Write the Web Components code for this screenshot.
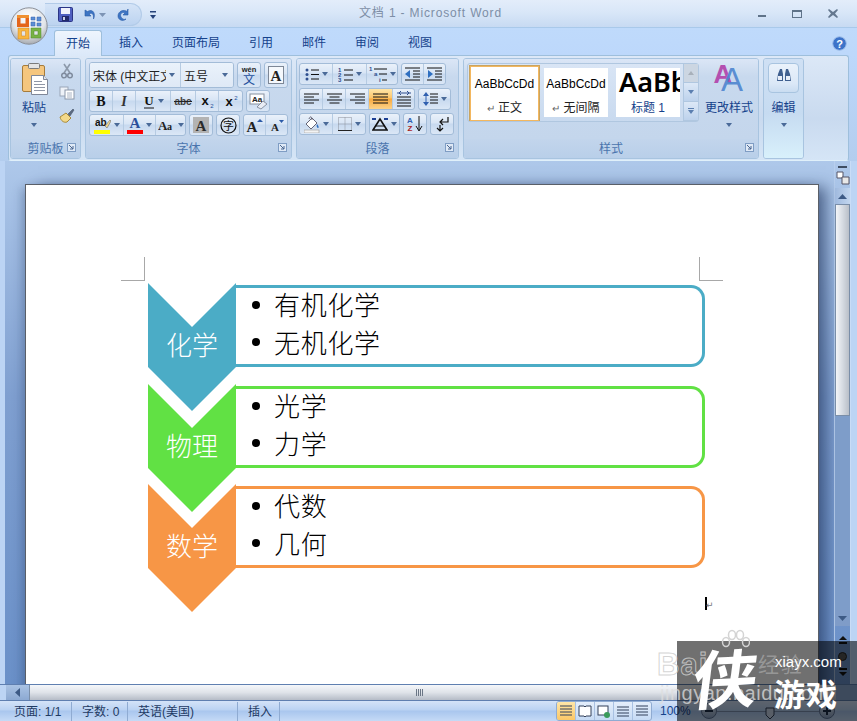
<!DOCTYPE html>
<html lang="zh-CN">
<head>
<meta charset="UTF-8">
<title>文档 1 - Microsoft Word</title>
<style>
    html, body { margin: 0; padding: 0; height: 100%; overflow: hidden; }
    body { font: 12px "Liberation Sans", "Noto Sans CJK SC", sans-serif; }
</style>
</head>
<body>
<word-window>
    <title-bar slot="title"></title-bar>
    <ribbon-tabs slot="tabs"></ribbon-tabs>

    <ribbon-panel slot="ribbon">
        <ribbon-group label="剪贴板" w="71" launcher>
            <tool-row gap="0">
                <big-btn w="46" label="粘贴" icon="paste" caret></big-btn>
                <tool-stack gap="0" top="1">
                    <tool-btn w="20" h="22" icon="cut" flat></tool-btn>
                    <tool-btn w="20" h="22" icon="copy" flat></tool-btn>
                    <tool-btn w="20" h="22" icon="painter" flat></tool-btn>
                </tool-stack>
            </tool-row>
        </ribbon-group>

        <ribbon-group label="字体" w="207" launcher>
            <tool-stack gap="2" top="3" left="3">
                <tool-row gap="3">
                    <tool-strip>
                        <combo-box w="91" text="宋体 (中文正文)"></combo-box>
                        <combo-box w="52" text="五号"></combo-box>
                    </tool-strip>
                    <tool-strip><tool-btn w="22" h="24" icon="wen"></tool-btn></tool-strip>
                    <tool-strip><tool-btn w="22" h="24" icon="boxA"></tool-btn></tool-strip>
                </tool-row>
                <tool-row gap="3">
                    <tool-strip>
                        <tool-btn w="23" icon="bold"></tool-btn>
                        <tool-btn w="23" icon="italic"></tool-btn>
                        <tool-btn w="35" icon="under" caret></tool-btn>
                        <tool-btn w="25" icon="strike"></tool-btn>
                        <tool-btn w="23" icon="sub"></tool-btn>
                        <tool-btn w="23" icon="sup"></tool-btn>
                    </tool-strip>
                    <tool-strip><tool-btn w="22" icon="clearfmt"></tool-btn></tool-strip>
                </tool-row>
                <tool-row gap="3">
                    <tool-strip>
                        <tool-btn w="34" icon="highlight" caret></tool-btn>
                        <tool-btn w="32" icon="fontcolor" caret></tool-btn>
                        <tool-btn w="29" icon="changecase" caret></tool-btn>
                    </tool-strip>
                    <tool-strip><tool-btn w="22" icon="shadeA"></tool-btn></tool-strip>
                    <tool-strip><tool-btn w="22" icon="circled"></tool-btn></tool-strip>
                    <tool-strip>
                        <tool-btn w="22" icon="grow"></tool-btn>
                        <tool-btn w="21" icon="shrink"></tool-btn>
                    </tool-strip>
                </tool-row>
            </tool-stack>
        </ribbon-group>

        <ribbon-group label="段落" w="163" launcher>
            <tool-stack gap="3" top="4" left="2">
                <tool-row gap="3">
                    <tool-strip>
                        <tool-btn w="33" icon="bullets" caret></tool-btn>
                        <tool-btn w="34" icon="numbers" caret></tool-btn>
                        <tool-btn w="30" icon="multi" caret></tool-btn>
                    </tool-strip>
                    <tool-strip>
                        <tool-btn w="22" icon="outdent"></tool-btn>
                        <tool-btn w="21" icon="indent"></tool-btn>
                    </tool-strip>
                </tool-row>
                <tool-row gap="3">
                    <tool-strip>
                        <tool-btn w="23" icon="alignL"></tool-btn>
                        <tool-btn w="23" icon="alignC"></tool-btn>
                        <tool-btn w="23" icon="alignR"></tool-btn>
                        <tool-btn w="24" icon="alignJ" active></tool-btn>
                        <tool-btn w="21" icon="distribute"></tool-btn>
                    </tool-strip>
                    <tool-strip><tool-btn w="31" icon="spacing" caret></tool-btn></tool-strip>
                </tool-row>
                <tool-row gap="3">
                    <tool-strip>
                        <tool-btn w="33" icon="fill" caret></tool-btn>
                        <tool-btn w="32" icon="borders" caret></tool-btn>
                    </tool-strip>
                    <tool-strip><tool-btn w="29" icon="chinese" caret></tool-btn></tool-strip>
                    <tool-strip><tool-btn w="22" icon="sort"></tool-btn></tool-strip>
                    <tool-strip><tool-btn w="22" icon="marks"></tool-btn></tool-strip>
                </tool-row>
            </tool-stack>
        </ribbon-group>

        <ribbon-group label="样式" w="296" launcher>
            <tool-row gap="4" pad="3">
                <style-gallery>
                    <style-card w="71" sel mark label="正文">AaBbCcDd</style-card>
                    <style-card w="64" mark label="无间隔">AaBbCcDd</style-card>
                    <style-card w="64" big label="标题 1">AaBb</style-card>
                </style-gallery>
                <big-btn w="52" label="更改样式" icon="changestyle" caret></big-btn>
            </tool-row>
        </ribbon-group>

        <ribbon-group label="" w="41" hot>
            <edit-btn></edit-btn>
        </ribbon-group>
    </ribbon-panel>

    <doc-area slot="doc">
        <doc-page>
            <smart-row style="height:101px" color="#4bacc6" name="化学">
                <li-item>有机化学</li-item>
                <li-item>无机化学</li-item>
            </smart-row>
            <smart-row style="height:100px" color="#61e144" name="物理">
                <li-item>光学</li-item>
                <li-item>力学</li-item>
            </smart-row>
            <smart-row style="height:100px" color="#f79646" name="数学">
                <li-item>代数</li-item>
                <li-item>几何</li-item>
            </smart-row>
        </doc-page>
    </doc-area>

    <h-scroll slot="hscroll"></h-scroll>
    <status-bar slot="status"></status-bar>
    <site-badge slot="badge"></site-badge>
</word-window>

<script>
    const CJK = '"Liberation Sans", "Noto Sans CJK SC", sans-serif';
    const svg = (w, h, body) => `<svg width="${w}" height="${h}" viewBox="0 0 ${w} ${h}" xmlns="http://www.w3.org/2000/svg">${body}</svg>`;
    const lines = (rows) => rows.map(r => `<path d="M${r[0]} ${r[1]}h${r[2]}" stroke="${r[3] || '#111'}" stroke-width="1"/>`).join('');

    // icons of the ribbon, drawn at their own pixel size
    const ICONS = {
        paste: svg(30, 32, `<rect x="3.500" y="2.500" width="22" height="26" rx="1.500" fill="#f5c67e" stroke="#a67c3c"/><rect x="9.500" y="0.500" width="11" height="5" rx="1" fill="#e4e4e4" stroke="#7b7b7b"/><path d="M12.500 12.500h12l4 4v15h-16z" fill="#fff" stroke="#7f8798"/><path d="M24.500 12.500v4h4" fill="#dfe5ee" stroke="#7f8798"/>${lines([[15,18.5,8,'#8f96a6'],[15,21.5,11,'#8f96a6'],[15,24.5,11,'#8f96a6'],[15,27.5,11,'#8f96a6']])}`),
        cut: svg(12, 16, `<path d="M3 1l6 9M9 1L3 10" stroke="#8d99aa" stroke-width="1.6" fill="none"/><circle cx="3" cy="12.500" r="2.300" fill="none" stroke="#7f8b9d" stroke-width="1.500"/><circle cx="9" cy="12.500" r="2.300" fill="none" stroke="#7f8b9d" stroke-width="1.500"/>`),
        copy: svg(16, 14, `<rect x="1" y="1" width="8" height="9" fill="#eef2f8" stroke="#9aa6b8"/><rect x="6" y="4" width="9" height="9" fill="#fff" stroke="#8b97aa"/>${lines([[8,7,5,'#aab4c4'],[8,9,5,'#aab4c4'],[8,11,5,'#aab4c4']])}`),
        painter: svg(16, 15, `<path d="M1 9l6-4 5 5-4 4c-3 1-6-1-7-5z" fill="#f3d98a" stroke="#a88a3a"/><path d="M9 6l5-5 1 1-4 6z" fill="#5b6a80" stroke="#47566c" stroke-width=".6"/>`),
        wen: svg(18, 20, `<text x="9" y="7" font-size="7.500" font-weight="700" text-anchor="middle" fill="#222" font-family="Liberation Sans">wén</text><text x="9" y="19" font-size="12" text-anchor="middle" fill="#1f4f9c" font-family="Noto Sans CJK SC">文</text>`),
        boxA: svg(16, 18, `<rect x=".5" y=".5" width="15" height="17" fill="#f5f8fc" stroke="#7d8796"/><text x="8" y="15" font-size="15" font-weight="700" text-anchor="middle" fill="#222" font-family="Liberation Serif">A</text>`),
        bold: svg(12, 14, `<text x="6" y="12" font-size="14" font-weight="700" text-anchor="middle" fill="#111" font-family="Liberation Serif">B</text>`),
        italic: svg(10, 14, `<text x="5" y="12" font-size="14" font-style="italic" font-weight="700" text-anchor="middle" fill="#333" font-family="Liberation Serif">I</text>`),
        under: svg(12, 15, `<text x="6" y="11" font-size="13" font-weight="700" text-anchor="middle" fill="#111" font-family="Liberation Serif">U</text><path d="M1 14h10" stroke="#111"/>`),
        strike: svg(18, 12, `<text x="9" y="10" font-size="10" font-weight="700" text-anchor="middle" fill="#444" font-family="Liberation Sans">abc</text><path d="M0 6.500h18" stroke="#222"/>`),
        sub: svg(14, 14, `<text x="5" y="11" font-size="13" font-weight="700" text-anchor="middle" fill="#111" font-family="Liberation Sans">x</text><text x="12" y="14" font-size="6" text-anchor="middle" fill="#1d4f9c" font-family="Liberation Sans">2</text>`),
        sup: svg(14, 14, `<text x="5" y="12" font-size="13" font-weight="700" text-anchor="middle" fill="#111" font-family="Liberation Sans">x</text><text x="12" y="6" font-size="6" text-anchor="middle" fill="#1d4f9c" font-family="Liberation Sans">2</text>`),
        clearfmt: svg(19, 17, `<rect x="1" y="1" width="14" height="10" fill="#fff" stroke="#8791a0"/><text x="8" y="9" font-size="8" font-weight="700" text-anchor="middle" fill="#222" font-family="Liberation Sans">Aa</text><path d="M8 14l6-6 4 3-6 5z" fill="#e8ecf4" stroke="#8a93a4"/>`),
        highlight: svg(17, 20, `<text x="1" y="11" font-size="10" font-weight="700" fill="#111" font-family="Liberation Sans">ab</text><path d="M11 11l5-6 1 1-4 7z" fill="#f1d68d" stroke="#7d7d7d" stroke-width=".7"/><rect y="15" width="16" height="4" fill="#ffff00"/>`),
        fontcolor: svg(16, 20, `<text x="8" y="13" font-size="15" font-weight="700" text-anchor="middle" fill="#2b4f9a" font-family="Liberation Serif">A</text><rect y="15" width="16" height="4" fill="#f00"/>`),
        changecase: svg(17, 14, `<text x="0" y="12" font-size="13" font-weight="700" fill="#222" font-family="Liberation Serif">A</text><text x="9" y="12" font-size="10" font-weight="700" fill="#222" font-family="Liberation Serif">a</text>`),
        shadeA: svg(16, 16, `<rect width="16" height="16" fill="#b3b3b3"/><text x="8" y="14" font-size="15" font-weight="700" text-anchor="middle" fill="#2c2c2c" font-family="Liberation Serif">A</text>`),
        circled: svg(17, 17, `<circle cx="8.500" cy="8.500" r="7.500" fill="none" stroke="#111" stroke-width="1.200"/><text x="8.500" y="12.500" font-size="11" text-anchor="middle" fill="#111" font-family="Noto Sans CJK SC">字</text>`),
        grow: svg(17, 15, `<text x="6" y="14" font-size="15" font-weight="700" text-anchor="middle" fill="#222" font-family="Liberation Serif">A</text><path d="M11 4l3-3 3 3z" fill="#2b5aa8"/>`),
        shrink: svg(14, 13, `<text x="5" y="12" font-size="11" font-weight="700" text-anchor="middle" fill="#222" font-family="Liberation Serif">A</text><path d="M9 1h5l-2.500 3z" fill="#2b5aa8"/>`),
        bullets: svg(14, 13, `<g fill="#2f4f8f"><circle cx="2" cy="2" r="1.500"/><circle cx="2" cy="6.500" r="1.500"/><circle cx="2" cy="11" r="1.500"/></g>${lines([[6,2,8],[6,6.5,8],[6,11,8]])}`),
        numbers: svg(15, 15, `<g fill="#2f4f8f" font-size="6" font-weight="700" font-family="Liberation Sans"><text x="0" y="5">1</text><text x="0" y="10">2</text><text x="0" y="15">3</text></g>${lines([[6,3,9],[6,8,9],[6,13,9]])}`),
        multi: svg(18, 17, `<g fill="#2f4f8f" font-size="6" font-weight="700" font-family="Liberation Sans"><text x="0" y="5">1</text><text x="5" y="10">a</text><text x="10" y="16">i</text></g>${lines([[5,3,13],[10,8,8],[13,14,5]])}`),
        outdent: svg(16, 15, `${lines([[0,1,15],[8,4,7],[8,7,7],[8,10,7],[0,13,15]])}<path d="M0 7l5-4v8z" fill="#2f6fc0"/>`),
        indent: svg(16, 15, `${lines([[0,1,15],[8,4,7],[8,7,7],[8,10,7],[0,13,15]])}<path d="M6 7L1 3v8z" fill="#2f6fc0"/>`),
        alignL: svg(15, 12, lines([[0,1,15],[0,4,10],[0,7,15],[0,10,10]])),
        alignC: svg(15, 12, lines([[0,1,15],[2.5,4,10],[0,7,15],[2.5,10,10]])),
        alignR: svg(15, 12, lines([[0,1,15],[5,4,10],[0,7,15],[5,10,10]])),
        alignJ: svg(15, 12, lines([[0,1,15],[0,4,15],[0,7,15],[0,10,15]])),
        distribute: svg(16, 16, `<path d="M1 2h14M3 2l2-2M3 2l2 2M13 2l-2-2M13 2l-2 2" stroke="#2f4f8f" fill="none"/>${lines([[1,6,14],[1,9,14],[1,12,14],[1,15,14]])}`),
        spacing: svg(15, 16, `<path d="M3 1l3 4H0zM3 15l3-4H0z" fill="#2f5faf"/><path d="M3 5v6" stroke="#2f5faf"/>${lines([[7,3,8],[7,6,8],[7,9,8],[7,12,8]])}`),
        fill: svg(16, 17, `<path d="M2 8l6-6 5 5-6 6z" fill="#fff" stroke="#667"/><path d="M5 3c1-3 3-3 3 1" stroke="#667" fill="none"/><path d="M13 8c2 2 2 4 1 4s-2-2-1-4z" fill="#2f6fc0"/><rect y="14" width="15" height="3" fill="#f3f3f3" stroke="#999" stroke-width=".6"/>`),
        borders: svg(14, 14, `<path d="M.5.5h13v13H.5zM7 .5v13M.5 7h13" fill="none" stroke="#8a8f98" stroke-dasharray="1 1"/><path d="M0 13.500h14" stroke="#222"/>`),
        chinese: svg(16, 14, `<path d="M8 2L1 13h14z" fill="none" stroke="#111" stroke-width="1.600"/><path d="M3 9h10" stroke="#111"/><path d="M0 2h4M12 2h4" stroke="#1c3f94" stroke-width="2"/>`),
        sort: svg(18, 16, `<text x="4" y="7" font-size="8" font-weight="700" text-anchor="middle" fill="#2f5faf" font-family="Liberation Sans">A</text><text x="4" y="15" font-size="8" font-weight="700" text-anchor="middle" fill="#a22" font-family="Liberation Sans">Z</text><path d="M13 0v14M10 10l3 5 3-5" fill="none" stroke="#111"/>`),
        marks: svg(14, 16, `<path d="M13 1v5H6M8 3L5 6l3 3" stroke="#111" fill="none" stroke-width="1.200"/><path d="M5 9v6M2 12l3 3 3-3" stroke="#111" fill="none" stroke-width="1.200"/>`),
        changestyle: svg(32, 30, `<text x="10" y="20" font-size="26" font-weight="700" text-anchor="middle" fill="#b44fb0" font-family="Liberation Sans">A</text><text x="19" y="28" font-size="33" text-anchor="middle" fill="#4f86d0" font-family="Liberation Sans" fill-opacity=".92">A</text>`)
    };

    function shadow(el, html) {
        el.attachShadow({ mode: 'open' }).innerHTML = html;
    }

    class WordWindow extends HTMLElement {
        connectedCallback() {
            shadow(this, `<style>
                :host { display: flex; flex-direction: column; position: relative; width: 857px; height: 721px; overflow: hidden; background: #bcd4f4; }
                .main { flex: 1; min-height: 0; display: flex; flex-direction: column; }
            </style>
            <slot name="title"></slot>
            <slot name="tabs"></slot>
            <slot name="ribbon"></slot>
            <div class="main"><slot name="doc"></slot></div>
            <slot name="hscroll"></slot>
            <slot name="status"></slot>
            <slot name="badge"></slot>`);
        }
    }

    class TitleBar extends HTMLElement {
        connectedCallback() {
            shadow(this, `<style>
                :host { display: flex; align-items: center; height: 27px; position: relative; border-bottom: 1px solid #a9c9ea; background: linear-gradient(#e3edfa, #d9e7f8 45%, #c7daf2); }
                .qat { display: flex; align-items: center; height: 21px; margin: 2px 0 0 45px; padding-left: 13px; width: 83px; border: 1px solid #b2cbe8; border-left: 0; border-radius: 0 12px 12px 0; background: linear-gradient(#d5e4f7, #bcd3f0); box-sizing: content-box; }
                .more { margin: 3px 0 0 8px; }
                .title { position: absolute; left: 0; right: 0; top: 3px; text-align: center; font: 12px ${CJK}; color: #7d8ea6; letter-spacing: .85px; padding-left: 4px; box-sizing: border-box; }
                .win { margin-left: auto; display: flex; gap: 26px; padding-right: 19px; align-items: center; }
                .win svg:first-child { margin-top: 6px; }
                .orb { position: absolute; left: 10px; top: 7px; z-index: 5; }
            </style>
            <div class="qat">
                ${svg(16, 16, `<rect x=".5" y=".5" width="14" height="14" rx="1" fill="#4f5fc0" stroke="#2b3585"/><rect x="3" y="1" width="9" height="6" fill="#f0f2fb"/><rect x="4" y="9" width="7" height="5" fill="#222a6a"/><rect x="5" y="10" width="2" height="3" fill="#c9cfe8"/>`)}
                <span style="width:7px"></span>
                ${svg(15, 15, `<path d="M4 3v6h6L8 7c3-2 5 0 4.500 5C15 7 12 1 6.500 4.500z" fill="#3d75c4" stroke="#2a5aa6" stroke-width=".6"/>`)}
                <svg width="7" height="4" style="margin-left:3px"><path d="M0 0h7L3.500 4z" fill="#7d94b5"/></svg>
                <span style="width:10px"></span>
                ${svg(15, 15, `<path d="M12 2v6H7l2-2C6 4.500 3.500 7 5 10c1 2 3 3 5 2-3 3-8 1-8-3 0-5 6-7 9-4.500z" fill="#3d75c4" stroke="#2a5aa6" stroke-width=".6"/>`)}
            </div>
            <svg class="more" width="7" height="9"><path d="M0 0h6v1.500H0z" fill="#27437a"/><path d="M0 4h6L3 8z" fill="#27437a"/></svg>
            <div class="title">文档 1 - Microsoft Word</div>
            <div class="win">
                <svg width="8" height="3"><rect width="8" height="2" fill="#5f7389"/></svg>
                <svg width="10" height="8"><rect x=".5" y=".5" width="9" height="7" fill="none" stroke="#5f7389"/><rect width="10" height="2" fill="#5f7389"/></svg>
                <svg width="10" height="9"><path d="M1 0l4 3 4-3 1 1-3 3.500L10 8 9 9 5 6 1 9 0 8l3-3.500L0 1z" fill="#64788f"/></svg>
            </div>
            <svg class="orb" width="38" height="38" viewBox="0 0 38 38">
                <defs><radialGradient id="o" cx=".5" cy=".3" r=".75"><stop offset="0" stop-color="#fff"/><stop offset=".6" stop-color="#e2e5e9"/><stop offset="1" stop-color="#9a9ea4"/></radialGradient></defs>
                <circle cx="19" cy="19" r="18.200" fill="url(#o)" stroke="#8c9098"/>
                <path fill-rule="evenodd" d="M7 8h12v12H7zM10.500 11v5.500H15.500V11z" fill="#e4651b"/>
                <path d="M7 8h12v3H7z" fill="#f09030"/>
                <path d="M21 10h4v3h-4zM27 10h4v4h-4zM21 15h4v4h-4zM27 16h4v3h-4z" fill="#5d8ed4" stroke="#3563ad" stroke-width=".5"/>
                <path fill-rule="evenodd" d="M8 21h11v11H8zM11.500 24v5H15.500v-5z" fill="#f8b63f" stroke="#d6821a" stroke-width=".5"/>
                <path fill-rule="evenodd" d="M21 21h10v10H21zM24 24v4h4v-4z" fill="#78b246" stroke="#4d8a28" stroke-width=".5"/>
            </svg>`);
        }
    }

    class RibbonTabs extends HTMLElement {
        connectedCallback() {
            const names = ['开始', '插入', '页面布局', '引用', '邮件', '审阅', '视图'];
            shadow(this, `<style>
                :host { display: flex; height: 27px; padding-left: 54px; gap: 5px; align-items: flex-end; position: relative; background: linear-gradient(#bfdafb, #bdd8fb); }
                span { display: block; height: 25px; padding: 0 12px; font: 12px/26px ${CJK}; color: #15428b; box-sizing: border-box; }
                .on { background: linear-gradient(#eef5fd, #dbe8f9); border: 1px solid #9ebfdc; border-bottom: 0; border-radius: 3px 3px 0 0; padding: 0 11px; margin-bottom: -1px; height: 26px; position: relative; z-index: 2; }
                .help { position: absolute; right: 10px; top: 8px; }
            </style>
            ${names.map((n, i) => `<span class="${i ? '' : 'on'}">${n}</span>`).join('')}
            <svg class="help" width="15" height="15"><circle cx="7.500" cy="7.500" r="6.800" fill="#3d73c9" stroke="#9dbde8"/><text x="7.500" y="11.500" font-size="11" font-weight="700" text-anchor="middle" fill="#fff" font-family="Liberation Sans">?</text></svg>`);
        }
    }

    class RibbonPanel extends HTMLElement {
        connectedCallback() {
            shadow(this, `<style>
                :host { display: block; height: 106px; box-sizing: border-box; padding: 0 8px 0 8px; background: linear-gradient(#bdd8fb 0, #b3cdee 100%); }
                .box { height: 106px; box-sizing: border-box; display: flex; gap: 4px; padding: 2px 0 1px 1px; border: 1px solid #9ebfdc; border-bottom-color: #e0f0fa; border-radius: 3px; background: linear-gradient(#dce8f7, #c9daef 60%, #d5e5f6); }
            </style>
            <div class="box"><slot></slot></div>`);
        }
    }

    class RibbonGroup extends HTMLElement {
        connectedCallback() {
            const label = this.getAttribute('label');
            shadow(this, `<style>
                :host { display: flex; flex-direction: column; flex: none; width: ${this.getAttribute('w')}px; box-sizing: border-box; border: 1px solid #a8c4e0; border-radius: 3px; overflow: hidden; position: relative; }
                .body { flex: 1; background: ${this.hasAttribute('hot') ? 'linear-gradient(#cfe0f4, #c6dbf1 55%, #d8f0fb)' : 'linear-gradient(#dbe6f6, #c8d9ee 22%, #c4d6ec)'}; }
                .label { height: 19px; text-align: center; font: 12px/20px ${CJK}; color: #4a74ad; background: linear-gradient(#c2d5ec, #b9cfe9); overflow: hidden; }
                :host([hot]) .label { display: none; }
                svg { position: absolute; right: 4px; bottom: 6px; }
            </style>
            <div class="body"><slot></slot></div>
            <div class="label">${label}</div>
            ${this.hasAttribute('launcher') ? `<svg width="9" height="9"><rect x=".5" y=".5" width="8" height="8" fill="#dfe9f6" stroke="#7f9dc4"/><path d="M2 2l4 4M6 3v3H3" fill="none" stroke="#48658f"/></svg>` : ''}`);
        }
    }

    class ToolRow extends HTMLElement {
        connectedCallback() {
            shadow(this, `<style>:host { display: flex; gap: ${this.getAttribute('gap') || 0}px; padding-left: ${this.getAttribute('pad') || 0}px; }</style><slot></slot>`);
        }
    }

    class ToolStack extends HTMLElement {
        connectedCallback() {
            shadow(this, `<style>:host { display: flex; flex-direction: column; gap: ${this.getAttribute('gap') || 0}px; padding: ${this.getAttribute('top') || 0}px 0 0 ${this.getAttribute('left') || 0}px; }</style><slot></slot>`);
        }
    }

    class ToolStrip extends HTMLElement {
        connectedCallback() {
            shadow(this, `<style>
                :host { display: inline-flex; flex: none; border: 1px solid #a3bcd8; border-radius: 3px; overflow: hidden; background: linear-gradient(#eaf1fa, #d8e5f5 45%, #c7d9ef 50%, #dbe7f6); box-sizing: border-box; }
                ::slotted(*:not(:last-child)) { border-right: 1px solid #b6cbe2; }
            </style><slot></slot>`);
        }
    }

    class ToolBtn extends HTMLElement {
        connectedCallback() {
            const w = this.getAttribute('w'), h = this.getAttribute('h') || 20;
            shadow(this, `<style>
                :host { display: flex; flex: none; align-items: center; justify-content: center; gap: 3px; width: ${w}px; height: ${h}px; box-sizing: border-box; }
                :host([active]) { background: linear-gradient(#ffe6a8, #fdc56a 45%, #f9a93e 50%, #fcd38a); }
                svg { display: block; flex: none; }
                .c { flex: none; width: 0; height: 0; border: 3px solid transparent; border-top: 4px solid #4a6a98; border-bottom: 0; }
            </style>
            ${ICONS[this.getAttribute('icon')]}
            ${this.hasAttribute('caret') ? '<i class="c"></i>' : ''}`);
        }
    }

    class ComboBox extends HTMLElement {
        connectedCallback() {
            shadow(this, `<style>
                :host { display: flex; align-items: center; flex: none; width: ${this.getAttribute('w')}px; height: 24px; box-sizing: border-box; padding: 0 5px 0 3px; background: linear-gradient(#eaf2fb, #dfe9f6); }
                span { flex: 1; overflow: hidden; white-space: nowrap; font: 12px ${CJK}; color: #222; }
                i { width: 0; height: 0; border: 3px solid transparent; border-top: 4px solid #4a6a98; border-bottom: 0; margin-left: 3px; }
            </style><span>${this.getAttribute('text')}</span><i></i>`);
        }
    }

    class BigBtn extends HTMLElement {
        connectedCallback() {
            shadow(this, `<style>
                :host { display: flex; flex-direction: column; align-items: center; flex: none; width: ${this.getAttribute('w')}px; padding-top: 4px; font: 12px/15px ${CJK}; color: #15428b; }
                .ic { height: 34px; }
                .l { margin-top: 4px; white-space: nowrap; }
                i { width: 0; height: 0; margin-top: 7px; border: 3px solid transparent; border-top: 4px solid #4a6a98; border-bottom: 0; }
            </style>
            <div class="ic">${ICONS[this.getAttribute('icon')]}</div>
            <div class="l">${this.getAttribute('label')}</div>
            <i></i>`);
        }
    }

    class EditBtn extends HTMLElement {
        connectedCallback() {
            shadow(this, `<style>
                :host { display: flex; flex-direction: column; align-items: center; padding-top: 4px; font: 12px/15px ${CJK}; color: #15428b; }
                .ic { width: 31px; height: 30px; box-sizing: border-box; display: flex; align-items: center; justify-content: center; border: 1px solid #a8c4e0; border-radius: 4px; background: linear-gradient(#eaf2fb, #dbe8f7 70%, #c9dcf1); padding-bottom: 6px; }
                .l { margin-top: 8px; }
                i { width: 0; height: 0; margin-top: 7px; border: 3px solid transparent; border-top: 4px solid #4a6a98; border-bottom: 0; }
            </style>
            <div class="ic"><svg width="16" height="14"><path d="M2 6l2-5h2l1 5v7H1zM9 6l1-5h2l2 5 1 7H9z" fill="#3f5f8f"/><path d="M2 8h4v4H2zM10 8h4v4h-4z" fill="#e8eef8"/></svg></div>
            <div class="l">编辑</div>
            <i></i>`);
        }
    }

    class StyleGallery extends HTMLElement {
        connectedCallback() {
            shadow(this, `<style>
                :host { display: flex; flex: none; width: 232px; height: 59px; margin-top: 4px; box-sizing: border-box; border: 1px solid #b0c7e0; border-radius: 3px; background: linear-gradient(#d9e5f5, #c9daef); padding: 1px 0 0 1px; }
                .cards { display: flex; gap: 4px; width: 217px; overflow: hidden; align-items: flex-start; }
                .sb { margin-left: auto; width: 14px; display: flex; flex-direction: column; border-left: 1px solid #b0c7e0; margin-top: -1px; }
                .sb div { flex: 1; display: flex; align-items: center; justify-content: center; border-bottom: 1px solid #b0c7e0; background: linear-gradient(#dce8f7, #bdd2ec); }
                .sb div:first-child { background: #ccd6e2; }
                .sb i { width: 0; height: 0; border: 3px solid transparent; border-top: 4px solid #5c7fb0; border-bottom: 0; }
                .sb div:first-child i { border-top: 0; border-bottom: 4px solid #a8b0ba; }
                .sb div:last-child { flex-direction: column; gap: 1px; }
                .sb b { width: 6px; height: 1px; background: #5c7fb0; }
            </style>
            <div class="cards"><slot></slot></div>
            <div class="sb"><div><i></i></div><div><i></i></div><div><b></b><i></i></div></div>`);
        }
    }

    class StyleCard extends HTMLElement {
        connectedCallback() {
            const big = this.hasAttribute('big');
            shadow(this, `<style>
                :host { display: flex; flex-direction: column; align-items: center; flex: none; width: ${this.getAttribute('w')}px; height: 49px; margin-top: 3px; padding-top: ${big ? 0 : 6}px; box-sizing: border-box; background: #fff; overflow: hidden; color: #000; }
                :host([big]) { margin-left: 4px; }
                :host([sel]) { height: 57px; margin-top: 0; border: 2px solid #f3b75f; outline: 1px solid #c9a460; outline-offset: -1px; padding-top: 7px; }
                .s { font: ${big ? '600 27px/28px "Noto Sans"' : '12px/20px "Liberation Sans"'}; white-space: nowrap; align-self: ${big ? 'flex-start' : 'center'}; padding-left: ${big ? 3 : 0}px; }
                .n { margin-top: ${big ? 4 : 6}px; font: 12px/16px ${CJK}; color: ${big ? '#15428b' : '#222'}; white-space: nowrap; }
                .n em { font-style: normal; color: #666; font-size: 10px; margin-right: 3px; }
            </style>
            <div class="s"><slot></slot></div>
            <div class="n">${this.hasAttribute('mark') ? '<em>↵</em>' : ''}${this.getAttribute('label')}</div>`);
        }
    }

    class DocArea extends HTMLElement {
        connectedCallback() {
            shadow(this, `<style>
                :host { display: flex; height: 523px; overflow: hidden; background: linear-gradient(#aec8ea, #7f9fd0 45%, #6a90c8); }
                .left { flex: none; width: 5px; background: #bcd4f4; }
                .view { flex: none; width: 830px; height: 523px; padding: 23px 0 0 20px; box-sizing: border-box; overflow: hidden; }
                .bar { flex: none; width: 15px; display: flex; flex-direction: column; align-items: stretch; border-left: 1px solid #b8cfee; margin-left: -1px; }
                .edge { flex: 1; background: #bcd4f4; border-left: 1px solid #c9dcf6; }
                .dash { height: 2px; width: 9px; margin: 5px 0 2px 3px; background: #3e4d62; flex: none; }
                .btn { flex: none; display: flex; align-items: center; justify-content: center; }
                .arrow { height: 16px; background: linear-gradient(90deg, #9fb9de, #c2d6ef); }
                .thumb { flex: none; height: 212px; background: linear-gradient(90deg, #f3f5f8, #d6dbe2 50%, #b9bfc8); border: 1px solid #7a8ea8; box-sizing: border-box; }
                .track { flex: 1; background: #7e9dc9; }
                .nav { height: 16px; }
            </style>
            <div class="left"></div>
            <div class="view"><slot></slot></div>
            <div class="bar">
                <div class="dash"></div>
                <div class="btn" style="height:16px"><svg width="14" height="14"><path d="M1 1h6v6H1z" fill="#fff" stroke="#556"/><path d="M6 6h7v7H6z" fill="#e8e8e8" stroke="#556"/></svg></div>
                <div class="btn arrow" style="margin-top:2px"><svg width="9" height="5"><path d="M0 5l4.500-5L9 5z" fill="#3d5a85"/></svg></div>
                <div class="thumb"></div>
                <div class="track"></div>
                <div class="btn arrow" style="background:#7f9cc8"><svg width="9" height="5"><path d="M0 0l4.500 5L9 0z" fill="#3d5a85"/></svg></div>
                <div style="height:6px"></div>
                <div class="btn nav"><svg width="8" height="8"><path d="M4 0l4 4H0zM0 6h8v2H0z" fill="#111"/></svg></div>
                <div class="btn nav"><svg width="9" height="9"><circle cx="4.500" cy="4.500" r="4" fill="#555" stroke="#222"/></svg></div>
                <div class="btn nav"><svg width="8" height="8"><path d="M0 0h8v2H0zM4 8L0 4h8z" fill="#111"/></svg></div>
                <div style="height:4px"></div>
            </div>
            <div class="edge"></div>`);
        }
    }

    class DocPage extends HTMLElement {
        connectedCallback() {
            shadow(this, `<style>
                :host { display: block; width: 794px; height: 560px; box-sizing: border-box; padding: 98px 0 0 122px; position: relative; background: #fff; border: 1px solid #5a5f68; border-bottom: 0; box-shadow: 10px 0 14px -3px rgba(30,50,90,.65), -6px 0 10px -4px rgba(30,50,90,.35); }
                .crop { position: absolute; width: 23px; height: 23px; border: 0 solid #a8a8a8; top: 72px; }
                .tl { left: 95px; border-right-width: 1px; border-bottom-width: 1px; }
                .tr { left: 673px; border-left-width: 1px; border-bottom-width: 1px; }
                .end { position: absolute; left: 679px; top: 412px; display: flex; align-items: flex-start; }
                .end b { display: block; width: 2px; height: 13px; background: #000; }
                .end span { font: 9px/14px "DejaVu Sans", sans-serif; color: #777; margin: 1px 0 0 -1px; }
            </style>
            <div class="crop tl"></div><div class="crop tr"></div>
            <slot></slot>
            <div class="end"><b></b><span>↵</span></div>`);
        }
    }

    class SmartRow extends HTMLElement {
        connectedCallback() {
            const c = this.getAttribute('color');
            shadow(this, `<style>
                :host { display: flex; width: 557px; }
                .chev { flex: none; width: 88px; height: 128px; display: flex; align-items: flex-end; justify-content: center; padding-bottom: 47px; box-sizing: border-box; background: ${c}; color: #fff; font: 300 26px/40px "Noto Sans CJK SC", sans-serif; clip-path: polygon(0 0, 50% 44px, 100% 0, 100% 84px, 50% 100%, 0 84px); }
                .body { flex: none; width: 470px; height: 82px; margin: 2px 0 0 -1px; box-sizing: border-box; border: 3px solid ${c}; border-left-width: 0; border-radius: 0 14px 14px 0; padding: 0 0 0 17px; background: #fff; }
                .list { margin-top: -3px; }
            </style>
            <div class="chev">${this.getAttribute('name')}</div>
            <div class="body"><div class="list"><slot></slot></div></div>`);
        }
    }

    class LiItem extends HTMLElement {
        connectedCallback() {
            shadow(this, `<style>
                :host { display: flex; align-items: center; height: 37.5px; font: 300 26px/37px "Noto Sans CJK SC", sans-serif; color: #000; letter-spacing: .7px; }
                i { flex: none; width: 8px; height: 8px; margin: 2px 14px 0 0; border-radius: 50%; background: #000; }
            </style><i></i><slot></slot>`);
        }
    }

    class HScroll extends HTMLElement {
        connectedCallback() {
            shadow(this, `<style>
                :host { display: flex; height: 17px; box-sizing: border-box; border-top: 1px solid #5f7fb0; border-bottom: 1px solid #5f7fb0; background: #bcd4f4; padding-left: 6px; }
                .a { flex: none; width: 23px; display: flex; align-items: center; justify-content: center; background: linear-gradient(#aac3e4, #8ca9d2); }
                .t { flex: none; width: 807px; padding-right: 26px; display: flex; align-items: center; justify-content: center; border-left: 1px solid #7a8ea8; box-sizing: border-box; background: linear-gradient(#f5f7fa, #dfe3e9 50%, #b5bcc7); }
                .e { flex: 1; background: #8ca9d2; }
            </style>
            <div class="a"><svg width="5" height="9"><path d="M5 0L0 4.500 5 9z" fill="#3d5a85"/></svg></div>
            <div class="t"><svg width="8" height="7"><path d="M.5 0v7M2.500 0v7M4.500 0v7M6.500 0v7" stroke="#6b7686"/></svg></div>
            <div class="e"></div>`);
        }
    }

    class StatusBar extends HTMLElement {
        connectedCallback() {
            const ln = (r) => svg(14, 12, lines(r.map(y => [1, y, 12, '#33415a'])));
            shadow(this, `<style>
                :host { display: flex; align-items: center; height: 20px; flex: none; font: 12px/20px ${CJK}; color: #1f3a63; background: linear-gradient(#d4e3f8, #bad2f2 45%, #a9c6ee 50%, #c5daf6); }
                .c { flex: none; height: 19px; box-sizing: border-box; border-right: 1px solid #8fabd2; padding-left: 10px; white-space: nowrap; }
                .views { display: flex; margin-left: 276px; height: 18px; border: 1px solid #8fabd2; border-radius: 3px; overflow: hidden; background: linear-gradient(#e4eefb, #c6daf4); }
                .views div { width: 18px; display: flex; align-items: center; justify-content: center; border-right: 1px solid #a9c1e2; }
                .views div:first-child { background: linear-gradient(#ffe6a8, #fbc767); }
                .views div:last-child { border: 0; }
                .pct { margin-left: 8px; color: #15428b; width: 41px; }
                .zoom { display: flex; align-items: center; width: 134px; position: relative; }
                .zb { width: 14px; height: 14px; border-radius: 50%; border: 1px solid #5f7497; background: linear-gradient(#d8e4f4, #8ea6c8); display: flex; align-items: center; justify-content: center; flex: none; }
                .line { flex: 1; height: 1px; background: #7d92b2; }
                .knob { position: absolute; left: 64px; top: 4px; }
            </style>
            <div class="c" style="width:72px;padding-left:14px">页面: 1/1</div>
            <div class="c" style="width:56px">字数: 0</div>
            <div class="c" style="width:110px">英语(美国)</div>
            <div class="c" style="width:42px">插入</div>
            <div class="views">
                <div>${ln([1, 4, 7, 10])}</div>
                <div><svg width="14" height="12"><path d="M1 1h5l1 1 1-1h5v10H8l-1 1-1-1H1z" fill="#fff" stroke="#33415a"/></svg></div>
                <div><svg width="14" height="13"><rect x="1" y="1" width="10" height="9" fill="#fff" stroke="#33415a"/><circle cx="10" cy="10" r="3" fill="#3a9a5a"/></svg></div>
                <div>${ln([2, 5, 8, 11])}</div>
                <div>${ln([1, 4, 7, 10])}</div>
            </div>
            <div class="pct">100%</div>
            <div class="zoom">
                <div class="zb"><svg width="8" height="2"><rect width="8" height="2" fill="#1c2e4a"/></svg></div>
                <div class="line"></div>
                <div class="zb"><svg width="8" height="8"><path d="M3 0h2v3h3v2H5v3H3V5H0V3h3z" fill="#1c2e4a"/></svg></div>
                <svg class="knob" width="10" height="13"><path d="M1 1h8v7l-4 4-4-4z" fill="#c9d6ea" stroke="#33415a"/></svg>
            </div>`);
        }
    }

    // the site's stamp and the faint Baidu mark over the bottom right corner
    class SiteBadge extends HTMLElement {
        connectedCallback() {
            shadow(this, `<style>
                :host { position: absolute; left: 650px; top: 620px; width: 207px; height: 101px; display: block; pointer-events: none; z-index: 9; }
                .dark { position: absolute; left: 27px; top: 21px; right: 0; bottom: 0; background: rgba(0,0,0,.56); }
                .bai { position: absolute; left: 7px; top: 27px; font: 700 31px/36px "Liberation Sans", sans-serif; color: transparent; -webkit-text-stroke: 1px rgba(205,205,205,.85); letter-spacing: 1px; }
                .paw { position: absolute; left: 70px; top: 9px; }
                .jing { position: absolute; left: 108px; top: 29px; font: 21px/28px "Noto Sans CJK SC", sans-serif; color: rgba(215,215,215,.4); letter-spacing: 2px; }
                .jy { position: absolute; left: 10px; top: 61px; font: 20px/24px "Liberation Sans", sans-serif; color: rgba(222,222,222,.75); letter-spacing: .5px; white-space: nowrap; }
                .xia { position: absolute; left: 43px; top: 20px; width: 66px; text-align: center; font: 700 64px/70px "Noto Sans CJK SC", sans-serif; color: #fff; transform: skewX(-10deg) rotate(-3deg); }
                .url { position: absolute; left: 125px; top: 32px; font: 15px/20px "Liberation Sans", sans-serif; color: #fff; }
                .cn { position: absolute; left: 124px; top: 55px; font: 700 31px/36px "Noto Sans CJK SC", sans-serif; color: #fff; white-space: nowrap; letter-spacing: 1px; }
            </style>
            <div class="dark"></div>
            <div class="bai">Bai</div>
            <svg class="paw" width="30" height="26" fill="none" stroke="#d4d4d4" stroke-width="1.500"><ellipse cx="6" cy="13" rx="3.500" ry="4.500"/><ellipse cx="12" cy="6" rx="3.500" ry="4.500"/><ellipse cx="20" cy="6" rx="3.500" ry="4.500"/><ellipse cx="26" cy="13" rx="3.500" ry="4.500"/></svg>
            <div class="jing">经验</div>
            <div class="jy">jingyan.baidu.com</div>
            <div class="xia">侠</div>
            <div class="url">xiayx.com</div>
            <div class="cn">游戏</div>`);
        }
    }

    const defs = {
        'word-window': WordWindow, 'title-bar': TitleBar, 'ribbon-tabs': RibbonTabs, 'ribbon-panel': RibbonPanel,
        'ribbon-group': RibbonGroup, 'tool-row': ToolRow, 'tool-stack': ToolStack, 'tool-strip': ToolStrip,
        'tool-btn': ToolBtn, 'combo-box': ComboBox, 'big-btn': BigBtn, 'edit-btn': EditBtn,
        'style-gallery': StyleGallery, 'style-card': StyleCard, 'doc-area': DocArea, 'doc-page': DocPage,
        'smart-row': SmartRow, 'li-item': LiItem, 'h-scroll': HScroll, 'status-bar': StatusBar, 'site-badge': SiteBadge
    };
    Object.keys(defs).forEach(k => customElements.define(k, defs[k]));
</script>
</body>
</html>
